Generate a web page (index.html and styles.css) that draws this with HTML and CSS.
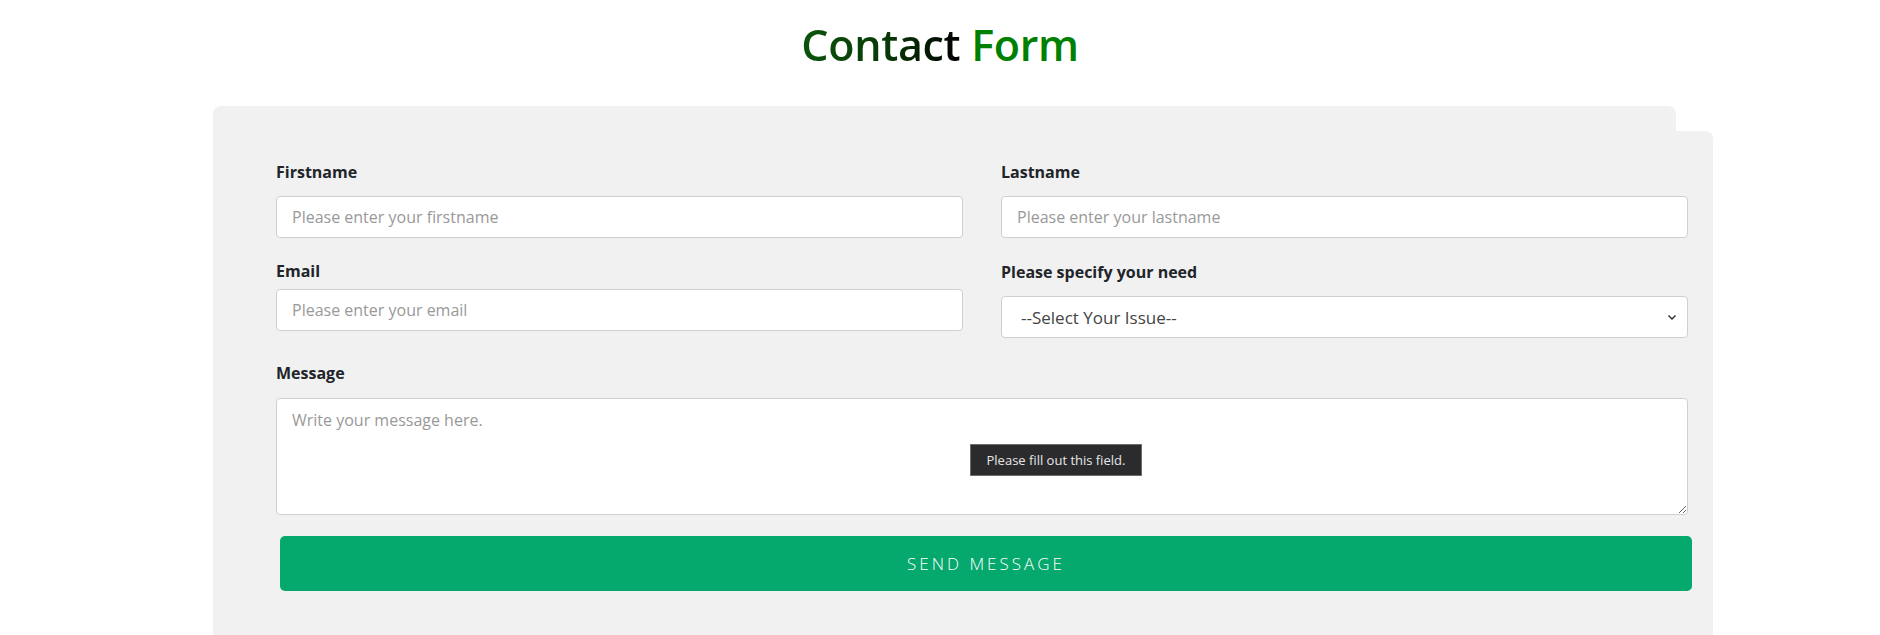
FILE: index.html
```html
<!DOCTYPE html>
<html lang="en">
<head>
<meta charset="utf-8">
<title>Contact Form</title>
<link rel="stylesheet" href="styles.css">
</head>
<body>
<h1 class="title"><span class="title-dark">Contact</span> <span class="title-green">Form</span></h1>
<div class="card">
  <form class="panel">
    <div class="grid">
      <div class="field field-first">
        <label class="label">Firstname</label>
        <input class="control" type="text" placeholder="Please enter your firstname">
      </div>
      <div class="field field-first">
        <label class="label">Lastname</label>
        <input class="control" type="text" placeholder="Please enter your lastname">
      </div>
      <div class="field field-email">
        <label class="label">Email</label>
        <input class="control" type="email" placeholder="Please enter your email">
      </div>
      <div class="field field-select">
        <label class="label">Please specify your need</label>
        <div class="select-wrap">
          <select class="control select">
            <option>--Select Your Issue--</option>
          </select>
          <svg class="chev" width="12" height="12" viewBox="0 0 12 12"><path d="M2.5 4.5 L6 8 L9.5 4.5" fill="none" stroke="#333" stroke-width="1.5"/></svg>
        </div>
      </div>
    </div>
    <div class="field field-msg">
      <label class="label">Message</label>
      <div class="msg-wrap">
        <textarea class="control textarea" placeholder="Write your message here."></textarea>
        <div class="tooltip">Please fill out this field.</div>
      </div>
    </div>
    <button class="send" type="button">SEND MESSAGE</button>
  </form>
</div>
</body>
</html>
```
FILE: styles.css
```css
html, body {
  margin: 0;
  padding: 0;
  background: #fff;
}
body {
  font-family: "Open Sans", "Noto Sans", sans-serif;
  color: #212529;
  overflow: hidden;
  height: 635px;
}
.title {
  margin: 0;
  padding-top: 17px;
  height: 106px;
  box-sizing: border-box;
  text-align: center;
  font-size: 43px;
  font-weight: 600;
  line-height: 56px;
  letter-spacing: -0.3px;
}
.title-dark {
  background: linear-gradient(90deg, #0b540b 0%, #083808 55%, #000 100%);
  -webkit-background-clip: text;
  background-clip: text;
  color: transparent;
}
.title-green {
  color: #008000;
}
.card {
  margin-left: 213px;
  width: 1463px;
  background: #f1f1f1;
  border-radius: 8px 8px 0 0;
  padding-top: 25px;
  height: 600px;
}
.panel {
  width: 1500px;
  box-sizing: border-box;
  background: #f1f1f1;
  border-radius: 0 8px 0 0;
  padding: 0 25px 0 63px;
  height: 575px;
}
.grid {
  display: grid;
  grid-template-columns: 687px 687px;
  column-gap: 38px;
  align-items: start;
}
.field {
  display: flex;
  flex-direction: column;
}
.label {
  font-size: 16px;
  font-weight: 700;
  line-height: 24px;
  color: #212529;
}
.field-first .label {
  margin-top: 29px;
  margin-bottom: 12px;
}
.field-email .label {
  margin-top: 21px;
  margin-bottom: 6px;
}
.field-select .label {
  margin-top: 22px;
  margin-bottom: 12px;
}
.control {
  box-sizing: border-box;
  height: 42px;
  border: 1px solid #cfcfcf;
  border-radius: 4px;
  background: #fff;
  font-family: inherit;
  font-size: 16px;
  padding: 0 15px;
  color: #555;
  outline: none;
}
.control::placeholder {
  color: #999;
}
.select-wrap {
  position: relative;
}
.select {
  width: 100%;
  appearance: none;
  -webkit-appearance: none;
  color: #444;
  font-size: 17px;
  padding-left: 19px;
}
.chev {
  position: absolute;
  right: 10px;
  top: 15px;
  pointer-events: none;
}
.field-msg .label {
  margin-top: 23px;
  margin-bottom: 13px;
}
.msg-wrap {
  position: relative;
}
.textarea {
  display: block;
  width: 1412px;
  height: 117px;
  padding: 10px 15px;
  resize: vertical;
  line-height: 22px;
}
.tooltip {
  position: absolute;
  left: 694px;
  top: 46px;
  width: 172px;
  height: 32px;
  box-sizing: border-box;
  background: #2b2b2e;
  border: 1px solid #6d6d70;
  color: #e6e6e6;
  font-size: 13px;
  line-height: 30px;
  text-align: center;
}
.send {
  display: block;
  margin-top: 21px;
  margin-left: 4px;
  width: 1412px;
  height: 55px;
  border: 0;
  border-radius: 5px;
  background: #05a86d;
  color: #fff;
  font-family: inherit;
  font-size: 17px;
  font-weight: 300;
  letter-spacing: 3px;
}
```
